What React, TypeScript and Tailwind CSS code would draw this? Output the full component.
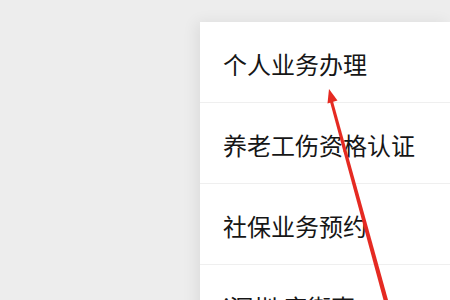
import React from "react";

const items = ["个人业务办理", "养老工伤资格认证", "社保业务预约", "i深圳 康街事"];

export default function App() {
  return (
    <div
      className="relative w-[450px] h-[300px] overflow-hidden bg-[#ededed]"
      style={{ fontFamily: '"Noto Sans CJK SC", "Noto Sans", sans-serif' }}
    >
      <div className="flex pt-[22px] pl-[200px]">
        <div className="w-[250px] bg-white shadow-[-4px_0_14px_rgba(0,0,0,0.07)] flex flex-col">
          {items.map((t) => (
            <div
              key={t}
              className="h-[81px] flex items-center pl-[23px] pt-[3px] border-b border-[#efefef] text-[24px] leading-none text-[#161616] whitespace-nowrap"
            >
              {t}
            </div>
          ))}
        </div>
      </div>
      <svg className="absolute left-0 top-0" width="450" height="300" viewBox="0 0 450 300">
        <polygon points="329.5,100 332.5,99.5 388,300 383.5,300" fill="#e52a22" />
        <polygon points="329,89 337.5,100.5 327.5,103.5" fill="#e52a22" />
      </svg>
    </div>
  );
}
